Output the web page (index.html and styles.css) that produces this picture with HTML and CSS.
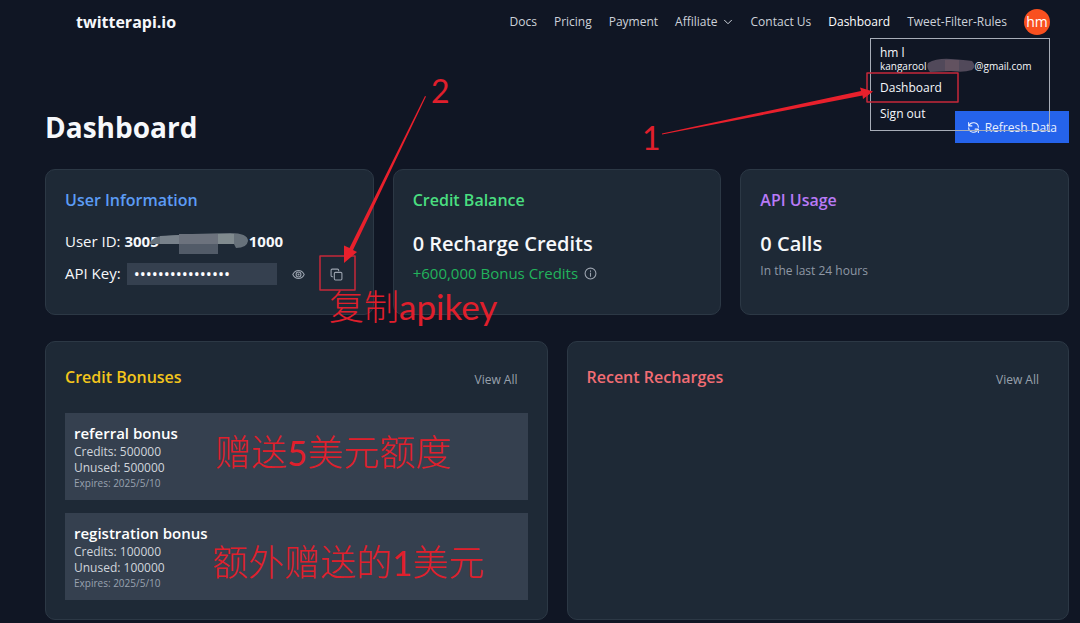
FILE: index.html
```html
<!DOCTYPE html>
<html lang="en">
<head>
<meta charset="utf-8">
<title>Dashboard - twitterapi.io</title>
<link rel="stylesheet" href="styles.css">
</head>
<body>
<div class="page">
  <header class="header">
    <a class="brand" href="#">twitterapi.io</a>
    <nav class="nav">
      <a href="#">Docs</a>
      <a href="#">Pricing</a>
      <a href="#">Payment</a>
      <button class="nav-toggle" type="button">Affiliate
        <svg class="chevron" viewBox="0 0 24 24"><path d="M5 8.500l7 7 7-7"/></svg>
      </button>
      <a href="#">Contact Us</a>
      <a class="active" href="#">Dashboard</a>
      <a class="rules" href="#">Tweet-Filter-Rules</a>
    </nav>
    <div class="account">
      <button class="avatar" type="button">hm</button>
      <div class="menu">
        <div class="menu-name">hm l</div>
        <div class="menu-mail"><span>kangarool</span><svg class="mail-smear" viewBox="0 0 48 15"><path d="M1 5Q10 0 24 1T45 3Q50 8 45 12Q36 15 24 13L3 14Q-1 10 1 5Z" fill="#51495a"/><path d="M18 2h14v11H18z" fill="#625260"/></svg><span>@gmail.com</span></div>
        <a class="menu-link" href="#">Dashboard</a>
        <a class="menu-link" href="#">Sign out</a>
      </div>
    </div>
  </header>

  <main class="main">
    <div class="title-row">
      <h1>Dashboard</h1>
      <button class="refresh" type="button">
        <svg class="refresh-icon" viewBox="0 0 24 24"><path d="M3 3v6h6M3.500 9A9 8.500 0 0 1 21 11.500M21 21v-6h-6M20.500 15A9 8.500 0 0 1 3 12.500"/></svg>
        Refresh Data
      </button>
    </div>

    <section class="stats">
      <article class="card">
        <h2 class="blue">User Information</h2>
        <div class="user-id">User ID: <strong>3005</strong><svg class="id-smear" viewBox="0 0 99 22"><path d="M0 10Q5 3 16 4L42 2 80 1Q98 1 98 9Q97 16 86 16L84 12H0Z" fill="#67717a"/><path d="M10 4L30 3v9H10z" fill="#78818a"/><path d="M68 2h16v10H68z" fill="#808a8e"/><path d="M29 2h39v20H29z" fill="#525b68"/><path d="M29 2h39v10H29z" fill="#6c727d"/></svg><strong>1000</strong></div>
        <div class="key-row">
          <label for="key">API Key:</label>
          <input id="key" type="password" value="abcdefghijklmnop" readonly>
          <button class="icon-btn" type="button" aria-label="Show key"><svg viewBox="0 0 24 24"><path d="M1.500 12C4 7 8 4.500 12 4.500S20 7 22.500 12C20 17 16 19.500 12 19.500S4 17 1.500 12Z"/><circle cx="12" cy="12" r="4.500"/><circle cx="12" cy="12" r="1"/></svg></button>
          <button class="icon-btn copy" type="button" aria-label="Copy key"><svg viewBox="0 0 24 24"><rect x="8" y="8" width="14" height="14" rx="2"/><path d="M5 16H4a2 2 0 0 1-2-2V4a2 2 0 0 1 2-2h10a2 2 0 0 1 2 2v1"/></svg></button>
        </div>
      </article>
      <article class="card">
        <h2 class="green">Credit Balance</h2>
        <div class="figure">0 Recharge Credits</div>
        <div class="bonus-line">+600,000 Bonus Credits
          <svg class="info" viewBox="0 0 24 24"><circle cx="12" cy="12" r="10"/><path d="M12 11v6M12 7v1"/></svg>
        </div>
      </article>
      <article class="card">
        <h2 class="purple">API Usage</h2>
        <div class="figure">0 Calls</div>
        <div class="period">In the last 24 hours</div>
      </article>
    </section>

    <section class="lists">
      <article class="card">
        <div class="list-head"><h2 class="yellow">Credit Bonuses</h2><a href="#">View All</a></div>
        <div class="bonus">
          <h3>referral bonus</h3>
          <div>Credits: 500000</div>
          <div>Unused: 500000</div>
          <div class="expires">Expires: 2025/5/10</div>
        </div>
        <div class="bonus">
          <h3>registration bonus</h3>
          <div>Credits: 100000</div>
          <div>Unused: 100000</div>
          <div class="expires">Expires: 2025/5/10</div>
        </div>
      </article>
      <article class="card">
        <div class="list-head"><h2 class="red">Recent Recharges</h2><a href="#">View All</a></div>
      </article>
    </section>
  </main>

  <svg class="marks" width="1080" height="623" viewBox="0 0 1080 623">
    <g fill="none" stroke="#c6283a" stroke-width="1.500">
      <rect x="867" y="73" width="91" height="29"/>
      <rect x="320" y="256" width="35" height="34"/>
    </g>
    <g fill="#e8202c">
      <path d="M662 133.500L861 91 860 87.500 873 91.500 863 99 862.500 95.500 662 134.500Z"/>
      <path d="M425 96L349.500 248 344 245.500 344 263 357 252 353 250 426 96.500Z"/>
    </g>
  </svg>
  <span class="note note-one">1</span>
  <span class="note note-two">2</span>
  <span class="note note-copy" lang="zh">复制<span class="latin">apikey</span></span>
  <span class="note note-five" lang="zh">赠送<span class="latin">5</span>美元额度</span>
  <span class="note note-extra" lang="zh">额外赠送的<span class="latin">1</span>美元</span>
</div>
</body>
</html>
```

FILE: styles.css
```css
* { box-sizing: border-box; }
body {
  margin: 0;
  background: #101624;
  color: #f6f8fb;
  font-family: "Open Sans", "Noto Sans", "Noto Sans CJK SC", sans-serif;
  font-size: 12px;
}
a { color: inherit; text-decoration: none; }
button { border: 0; padding: 0; background: none; color: inherit; font: inherit; }
h1, h2, h3 { margin: 0; }
svg { fill: none; stroke: currentColor; stroke-width: 2; stroke-linecap: round; stroke-linejoin: round; flex: none; }
.page { position: relative; min-height: 623px; overflow: hidden; }

.header { display: flex; align-items: center; height: 43px; padding: 0 30px 0 76px; }
.brand { font-size: 16px; font-weight: 700; margin-right: auto; }
.nav { display: flex; align-items: center; gap: 17px; margin-right: 17px; color: #cdd2da; }
.nav-toggle { display: flex; align-items: center; gap: 4px; }
.chevron { width: 12px; height: 12px; }
.active { color: #fff; font-weight: 500; }
.account { position: relative; }
.avatar { display: block; width: 26px; height: 26px; border-radius: 50%; background: #f9501f; color: #fff; font-size: 14px; line-height: 24px; }
.menu { position: absolute; z-index: 2; top: 29px; right: 0; width: 180px; height: 93px; padding: 5px 9px; border: 1px solid #a7adb8; }
.menu-name { line-height: 17px; }
.menu-mail { display: flex; align-items: center; font-size: 10px; line-height: 10px; height: 10px; margin-bottom: 8px; font-weight: 500; }
.mail-smear { width: 48px; height: 15px; stroke: none; }
.menu-link { display: block; line-height: 18px; margin-bottom: 8px; }

.main { padding: 68px 11px 0 45px; }
.title-row { display: flex; justify-content: space-between; align-items: center; height: 32px; margin-bottom: 26px; }
h1 { font-size: 28px; font-weight: 700; line-height: 32px; }
.refresh { display: flex; align-items: center; gap: 5px; height: 32px; padding: 0 12px; background: #2563eb; color: #e9efff; }
.refresh-icon { width: 13px; height: 13px; }

.card { border: 1px solid #2c3845; border-radius: 10px; background: #1e2936; padding: 19px; }
h2 { font-size: 16px; font-weight: 600; line-height: 22px; }
.blue { color: #5c9cf5; }
.green { color: #4ade80; }
.purple { color: #b97af7; }
.yellow { color: #f3c51c; }
.red { color: #f26d74; }

.stats { display: grid; grid-template-columns: repeat(3, 1fr); gap: 19px; margin-bottom: 26px; }
.stats .card { height: 146px; }
.user-id { display: flex; align-items: center; height: 22px; margin-top: 19px; font-size: 15px; white-space: pre; }
.user-id strong { font-size: 15px; font-weight: 700; }
.id-smear { width: 99px; height: 22px; margin: 4px 0 0 -9px; stroke: none; }
.key-row { display: flex; align-items: center; height: 22px; margin-top: 11px; font-size: 15px; }
.key-row label { line-height: 20px; padding-bottom: 2px; }
.key-row input { width: 150px; height: 22px; margin-left: 6px; padding: 0 7px; border: 0; border-radius: 0; background: #35404f; color: #fff; font-family: "Open Sans", sans-serif; font-size: 16px; outline: 0; }
.icon-btn { display: flex; margin-left: 15px; color: #9ba3af; }
.icon-btn svg { width: 13px; height: 13px; }
.copy { margin-left: 25px; }
.figure { margin-top: 20px; font-size: 20px; line-height: 26px; font-weight: 600; }
.bonus-line { display: flex; align-items: center; gap: 6px; margin-top: 6px; font-size: 15px; line-height: 20px; color: #22b35c; }
.info { width: 13px; height: 13px; color: #9ba3af; }
.period { margin-top: 5px; line-height: 18px; color: #8f98a5; }

.lists { display: grid; grid-template-columns: repeat(2, 1fr); gap: 19px; }
.lists .card { min-height: 278px; }
.list-head { display: flex; justify-content: space-between; align-items: center; height: 32px; padding-right: 10px; margin-bottom: 20px; }
.list-head a { color: #98a1ad; padding-top: 4px; }
.bonus { margin-bottom: 13px; padding: 10px 9px; background: #35404f; line-height: 16px; color: #d0d5dc; }
.bonus:last-child { margin-bottom: 0; }
h3 { font-size: 15px; font-weight: 600; line-height: 21px; color: #fff; }
.bonus .expires { font-size: 10px; line-height: 14px; color: #99a2af; }

.marks { position: absolute; z-index: 3; top: 0; left: 0; stroke: none; pointer-events: none; }
.note { position: absolute; z-index: 3; color: #e01f2c; font-family: Lato, "Noto Sans CJK SC", sans-serif; font-size: 36px; font-weight: 300; line-height: 40px; white-space: nowrap; }
.note .latin { font-size: 35px; font-weight: 400; }
.note-one, .note-two { font-size: 32px; font-weight: 400; }
.note-one { left: 642px; top: 118px; }
.note-two { left: 431px; top: 71px; }
.note-copy { left: 329px; top: 286px; font-size: 35px; }
.note-five { left: 215px; top: 432px; }
.note-extra { left: 212px; top: 542px; }
```
